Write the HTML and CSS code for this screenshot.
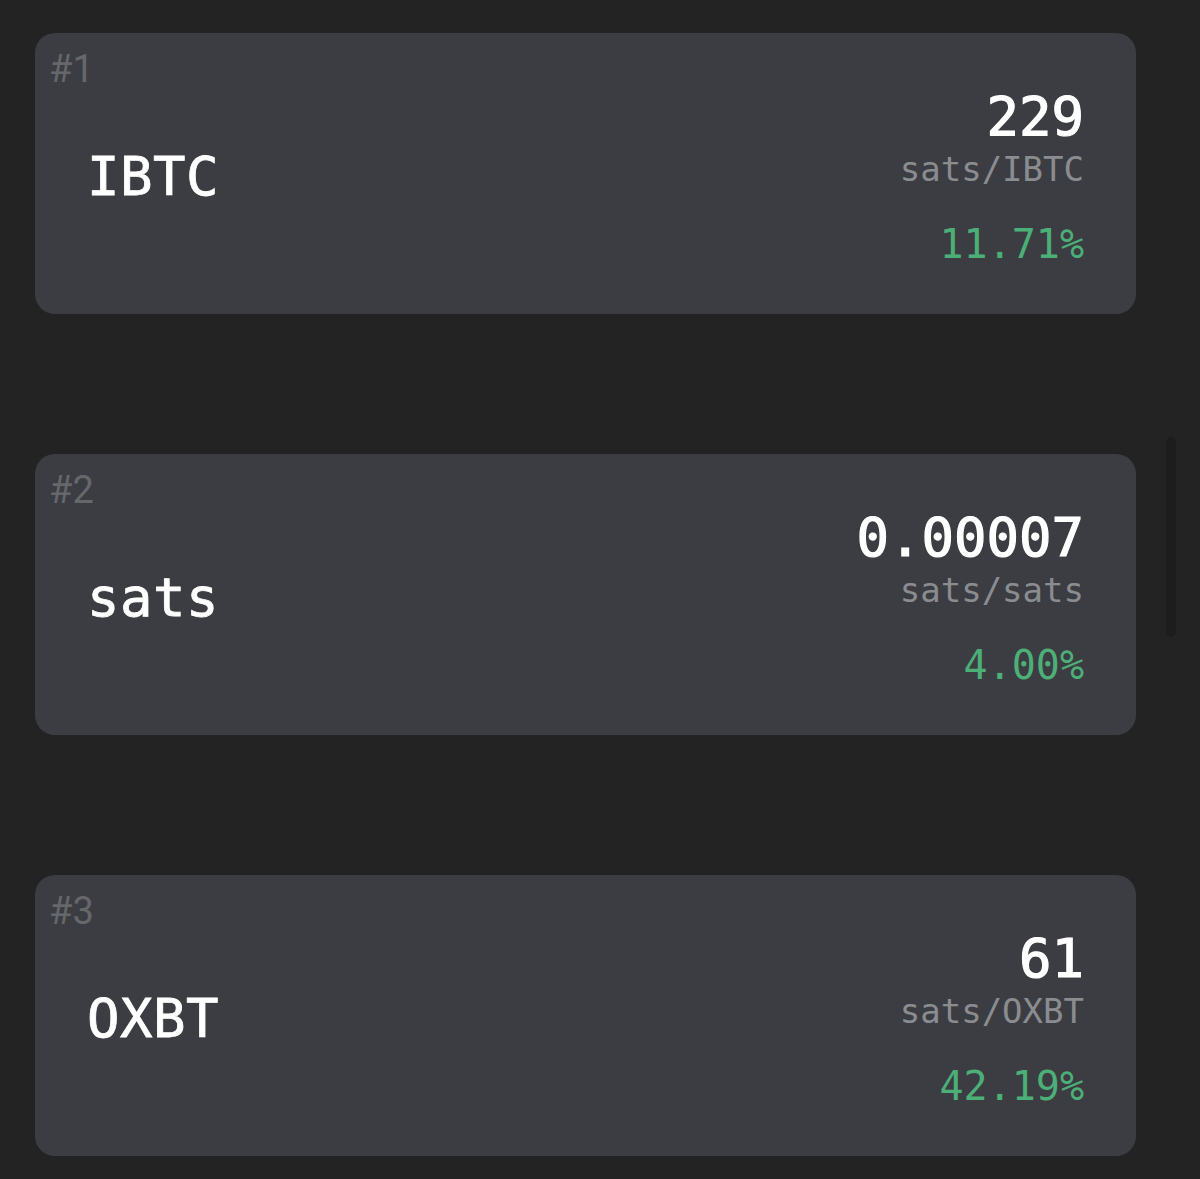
FILE: index.html
```html
<!DOCTYPE html>
<html lang="en">
<head>
  <meta charset="UTF-8">
  <meta name="viewport" content="width=device-width, initial-scale=1.0">
  <title>Token Prices</title>
  <link rel="stylesheet" href="styles.css">
</head>
<body>
  <div class="list">
    <div class="card">
      <span class="rank">#1</span>
      <div class="name">IBTC</div>
      <div class="price">
        <div class="value">229</div>
        <div class="unit">sats/IBTC</div>
        <div class="change">11.71%</div>
      </div>
    </div>

    <div class="card">
      <span class="rank">#2</span>
      <div class="name">sats</div>
      <div class="price">
        <div class="value">0.00007</div>
        <div class="unit">sats/sats</div>
        <div class="change">4.00%</div>
      </div>
    </div>

    <div class="card">
      <span class="rank">#3</span>
      <div class="name">OXBT</div>
      <div class="price">
        <div class="value">61</div>
        <div class="unit">sats/OXBT</div>
        <div class="change">42.19%</div>
      </div>
    </div>
  </div>

  <div class="scrollbar"></div>
</body>
</html>
```

FILE: styles.css
```css
body {
  margin: 0;
  background-color: #232323;
  font-family: "DejaVu Sans Mono", "Liberation Mono", monospace;
  color: #fff;
}

.list {
  display: flex;
  flex-direction: column;
  gap: 140px;
  padding: 33px 64px 40px 35px;
}

.card {
  position: relative;
  display: flex;
  align-items: center;
  justify-content: space-between;
  height: 281px;
  padding: 0 52px;
  background-color: #3c3d42;
  border-radius: 20px;
}

.rank {
  position: absolute;
  top: 14px;
  left: 14px;
  font-family: Roboto, "Noto Sans", sans-serif;
  font-size: 38px;
  line-height: 44px;
  color: #66676b;
}

.name {
  padding-top: 6px;
  font-size: 54px;
  line-height: 56px;
  letter-spacing: 0.5px;
  -webkit-text-stroke: 0.8px #fff;
}

.price {
  padding-top: 8px;
  text-align: right;
}

.value {
  font-size: 54px;
  line-height: 56px;
  -webkit-text-stroke: 1.2px #fff;
}

.unit {
  margin-top: 4px;
  font-size: 34px;
  line-height: 40px;
  color: #8b8c90;
}

.change {
  margin-top: 32px;
  font-size: 40px;
  line-height: 46px;
  color: #4caf78;
}

.scrollbar {
  position: fixed;
  top: 437px;
  right: 24px;
  width: 10px;
  height: 200px;
  border-radius: 5px;
  background-color: #1d1d1d;
}
```
